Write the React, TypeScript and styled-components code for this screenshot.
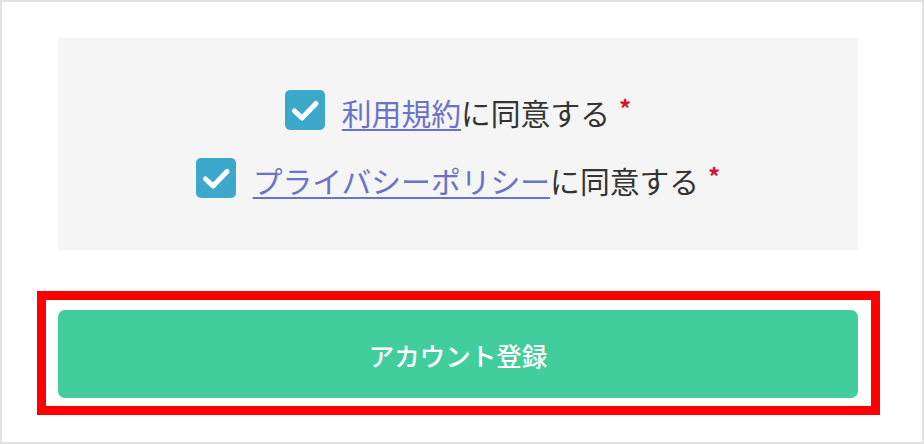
import styled, { createGlobalStyle } from "styled-components";

const GlobalStyle = createGlobalStyle`
  body {
    margin: 0;
    font-family: "Noto Sans CJK JP", "Noto Sans", sans-serif;
    background: #fff;
  }
`;

// check mark drawn inside the square checkbox
const CheckIcon = () => (
  <svg width="40" height="40" viewBox="0 0 40 40" fill="none">
    <polyline
      points="9.5,21 17,28 31,13.5"
      stroke="#fff"
      strokeWidth="5"
      strokeLinecap="round"
      strokeLinejoin="round"
    />
  </svg>
);

type Agreement = { link: string };

const agreements: Agreement[] = [{ link: "利用規約" }, { link: "プライバシーポリシー" }];

export default function App() {
  return (
    <>
      <GlobalStyle />
      <Page>
        <ConsentPanel>
          {agreements.map((a) => (
            <ConsentRow key={a.link}>
              <CheckBox>
                <CheckIcon />
              </CheckBox>
              <Label>
                <TermsLink href="#">{a.link}</TermsLink>に同意する
                <Required>*</Required>
              </Label>
            </ConsentRow>
          ))}
        </ConsentPanel>

        <HighlightFrame>
          <SubmitButton type="button">アカウント登録</SubmitButton>
        </HighlightFrame>
      </Page>
    </>
  );
}

const Page = styled.div`
  box-sizing: border-box;
  width: 924px;
  height: 444px;
  border: 2px solid #e2e2e2;
  padding: 36px 0 0 35px;
  display: flex;
  flex-direction: column;
  align-items: flex-start;
`;

const ConsentPanel = styled.div`
  box-sizing: border-box;
  width: 800px;
  height: 212px;
  margin-left: 21px;
  background: #f5f5f5;
  display: flex;
  flex-direction: column;
  justify-content: center;
  gap: 28px;
`;

const ConsentRow = styled.div`
  display: flex;
  align-items: center;
  justify-content: center;
  gap: 17px;
  height: 40px;
`;

const CheckBox = styled.span`
  width: 40px;
  height: 40px;
  border-radius: 5px;
  background: #3ea8cc;
  display: flex;
  align-items: center;
  justify-content: center;
  flex-shrink: 0;
`;

const Label = styled.span`
  font-size: 29.8px;
  line-height: 40px;
  color: #333;
  white-space: nowrap;
`;

const TermsLink = styled.a`
  color: #6a72c9;
  text-decoration: underline;
  text-underline-offset: 4px;
  text-decoration-thickness: 2px;
`;

const Required = styled.span`
  color: #e0102a;
  font-size: 24px;
  font-weight: 700;
  margin-left: 9px;
  vertical-align: 7px;
`;

const HighlightFrame = styled.div`
  margin-top: 41px;
  border: 9px solid #ff0000;
  padding: 10px 13px 8px 12px;
`;

const SubmitButton = styled.button`
  display: flex;
  align-items: center;
  justify-content: center;
  width: 800px;
  height: 88px;
  border: none;
  border-radius: 7px;
  background: #42cd9c;
  color: #fff;
  font-family: "Noto Sans CJK JP", "Noto Sans", sans-serif;
  font-size: 25.5px;
  font-weight: 500;
  cursor: pointer;
`;
